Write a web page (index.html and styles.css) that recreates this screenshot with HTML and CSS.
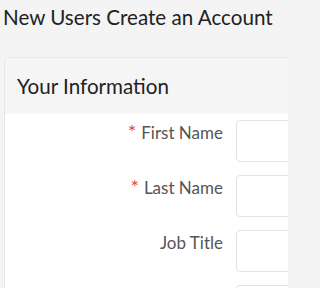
FILE: index.html
```html
<!DOCTYPE html>
<html>
<head>
<meta charset="utf-8">
<link rel="stylesheet" href="styles.css">
</head>
<body>
<div class="page">
  <h1 class="page-title">New Users Create an Account</h1>
  <div class="card">
    <div class="card-header">Your Information</div>
    <div class="card-body">
      <div class="row">
        <label class="label"><span class="req">*</span>First Name</label>
        <div class="input"></div>
      </div>
      <div class="row">
        <label class="label"><span class="req">*</span>Last Name</label>
        <div class="input"></div>
      </div>
      <div class="row">
        <label class="label">Job Title</label>
        <div class="input"></div>
      </div>
      <div class="row">
        <span class="label"></span>
        <div class="input"></div>
      </div>
    </div>
  </div>
</div>
</body>
</html>
```
FILE: styles.css
```css
html, body {
  margin: 0;
  padding: 0;
  background: #f4f4f4;
}
body {
  font-family: Lato, "Liberation Sans", sans-serif;
}
.page {
  width: 288px;
  height: 288px;
  overflow: hidden;
}
.page-title {
  margin: 5px 0 0 3px;
  font-size: 20.6px;
  font-weight: 400;
  line-height: 1.2;
  color: #222;
  height: 52px;
  white-space: nowrap;
}
.card {
  margin-left: 4px;
  width: 400px;
  background: #fff;
  border: 1px solid #e6e6e6;
  border-radius: 4px;
}
.card-header {
  box-sizing: border-box;
  height: 56px;
  padding: 16px 0 0 12px;
  background: #f5f5f5;
  border-bottom: 1px solid #fbfbfb;
  font-size: 20.6px;
  line-height: 1.2;
  color: #222;
  border-radius: 4px 4px 0 0;
}
.card-body {
  padding-top: 6px;
}
.row {
  display: flex;
  gap: 13px;
  margin-bottom: 13px;
}
.label {
  width: 218px;
  flex: none;
  text-align: right;
  box-sizing: border-box;
  padding-top: 3px;
  font-size: 17px;
  line-height: 20px;
  color: #555;
}
.req {
  color: #e5473a;
  font-size: 20px;
  line-height: 0;
  margin-right: 5px;
}
.input {
  width: 150px;
  flex: none;
  height: 42px;
  box-sizing: border-box;
  border: 1px solid #e2e2e2;
  border-radius: 4px;
  background: #fff;
}
```
